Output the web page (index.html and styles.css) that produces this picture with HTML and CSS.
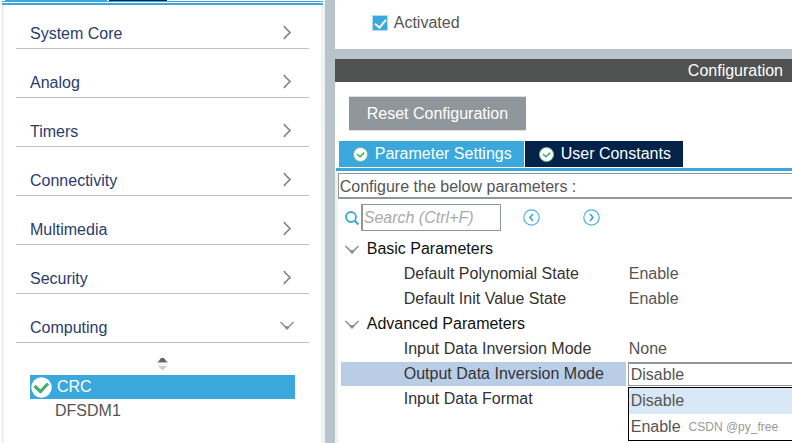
FILE: index.html
```html
<!DOCTYPE html>
<html lang="en">
<head>
<meta charset="utf-8">
<title>Configuration</title>
<link rel="stylesheet" href="styles.css">
</head>
<body>
<svg class="defs" aria-hidden="true">
  <symbol id="right" viewBox="0 0 10 15"><path d="M2 1 3.500 3 8 7.500 3.500 12 2 14" fill="none" stroke="#858585" stroke-width="1.700"/></symbol>
  <symbol id="down" viewBox="0 0 14 9"><path d="M.5 1 2.500 3 5.500 6H8.500L11.500 3 13.500 1" fill="none" stroke="#8c8c8c" stroke-width="1.500"/><path d="M4.500 5.500h5L8 8.500H6z" fill="#8c8c8c"/></symbol>
  <symbol id="ok" viewBox="0 0 16 16"><circle cx="8" cy="8" r="7.500" fill="#fff" stroke="#66bd83"/><path d="m4 7.500 3.500 3 4.500-4.500" fill="none" stroke="#3fac68" stroke-width="1.600"/></symbol>
</svg>
<div class="app">
  <nav class="sidebar" aria-label="Categories">
    <div class="strip"><span class="strip-on"></span><span class="strip-off"></span></div>
    <div class="side-body">
      <div class="categories">
        <button class="category">System Core<svg class="right"><use href="#right"/></svg></button>
        <button class="category">Analog<svg class="right"><use href="#right"/></svg></button>
        <button class="category">Timers<svg class="right"><use href="#right"/></svg></button>
        <button class="category">Connectivity<svg class="right"><use href="#right"/></svg></button>
        <button class="category">Multimedia<svg class="right"><use href="#right"/></svg></button>
        <button class="category">Security<svg class="right"><use href="#right"/></svg></button>
        <button class="category open">Computing<svg class="down"><use href="#down"/></svg></button>
      </div>
      <svg class="sorter" viewBox="0 0 11 14"><path d="M4 1h3l3 4H1z" fill="#656565"/><path d="M0 5h11v1H0z" fill="#bbb"/><path d="M0 7h11v1H0z" fill="#eee"/><path d="M1 9h9L6 13H5z" fill="#ccc"/></svg>
      <ul class="modules">
        <li><button class="module selected"><svg class="module-ok" viewBox="0 0 21 21"><circle cx="10.500" cy="10.500" r="10.200" fill="#fff"/><path d="m3.500 9 6 5.500 7.500-8" fill="none" stroke="#45b06c" stroke-width="3.200"/></svg>CRC</button></li>
        <li><button class="module">DFSDM1</button></li>
      </ul>
    </div>
  </nav>
  <main class="content">
    <section class="mode">
      <label class="activated"><input class="check" type="checkbox" checked>Activated</label>
    </section>
    <section class="config">
      <h1 class="title">Configuration</h1>
      <button class="reset">Reset Configuration</button>
      <div class="tabs" role="tablist">
        <button class="tab active" role="tab" aria-selected="true"><svg class="ok"><use href="#ok"/></svg>Parameter Settings</button>
        <button class="tab" role="tab" aria-selected="false"><svg class="ok"><use href="#ok"/></svg>User Constants</button>
      </div>
      <div class="pane">
        <p class="hint">Configure the below parameters :</p>
        <div class="search">
          <svg class="lens" viewBox="0 0 14 14"><circle cx="6" cy="6" r="5" fill="none" stroke="#3aa8dc" stroke-width="1.800"/><path d="m9.500 9.500 4 4" stroke="#3aa8dc" stroke-width="2.200"/></svg>
          <input class="field" type="text" placeholder="Search (Ctrl+F)" aria-label="Search">
          <button class="step" aria-label="Previous"><svg class="ring" viewBox="0 0 17 17"><circle cx="8.500" cy="8.500" r="7.700" fill="none" stroke="#4fb1e0" stroke-width="1.200"/><path d="m10 5-3 3.500 3 3.500" fill="none" stroke="#3aa8dc" stroke-width="1.700"/></svg></button>
          <button class="step" aria-label="Next"><svg class="ring" viewBox="0 0 17 17"><circle cx="8.500" cy="8.500" r="7.700" fill="none" stroke="#4fb1e0" stroke-width="1.200"/><path d="m7 5 3 3.500-3 3.500" fill="none" stroke="#3aa8dc" stroke-width="1.700"/></svg></button>
        </div>
        <table class="params">
          <colgroup><col class="name-col"><col></colgroup>
          <tbody>
            <tr><th class="group" colspan="2"><svg class="down"><use href="#down"/></svg>Basic Parameters</th></tr>
            <tr><th class="name">Default Polynomial State</th><td class="value">Enable</td></tr>
            <tr><th class="name">Default Init Value State</th><td class="value">Enable</td></tr>
            <tr><th class="group" colspan="2"><svg class="down"><use href="#down"/></svg>Advanced Parameters</th></tr>
            <tr><th class="name">Input Data Inversion Mode</th><td class="value">None</td></tr>
            <tr><th class="name current"><label for="output-mode">Output Data Inversion Mode</label></th>
              <td class="edit"><select class="choice" id="output-mode"><option>Disable</option><option>Enable</option></select>
                <ul class="menu" role="listbox" aria-label="Output Data Inversion Mode"><li class="item hover" role="option">Disable</li><li class="item" role="option">Enable<span class="mark">CSDN @py_free</span></li></ul></td></tr>
            <tr><th class="name">Input Data Format</th><td></td></tr>
          </tbody>
        </table>
      </div>
    </section>
  </main>
</div>
</body>
</html>
```
FILE: styles.css
```css
* {
  box-sizing: border-box;
}

body {
  margin: 0;
  background: #fff;
  color: #555;
  font: 16px/18px "Liberation Sans", Arial, sans-serif;
}

button,
input,
select {
  font: inherit;
  color: inherit;
  border: 0;
  border-radius: 0;
  background: none;
  padding: 0;
  margin: 0;
}

ul {
  list-style: none;
  margin: 0;
  padding: 0;
}

svg {
  flex: none;
}

.defs {
  display: none;
}

.app {
  display: flex;
  min-height: 100vh;
}

/* Category list */

.sidebar {
  display: flex;
  flex-direction: column;
  flex: 0 0 41%;
  padding-left: 1px;
}

.strip {
  display: flex;
  gap: 2px;
  height: 5px;
  margin: 0 2px 0 1px;
  padding-left: 3px;
  background: linear-gradient(#3aa8dc, #3aa8dc) 0 1px / 100% 1px no-repeat,
    linear-gradient(#3aa8dc, #3aa8dc) 0 3px / 100% 2px no-repeat;
}

.strip-on,
.strip-off {
  width: 102px;
  height: 1px;
  background: #3aa8dc;
}

.strip-off {
  width: 58px;
  background: #03234b;
}

.side-body {
  flex: 1;
  border: solid #f0f1f2;
  border-width: 0 4px 0 3px;
  padding: 20px 12px 0;
}

.categories {
  display: flex;
  flex-direction: column;
  gap: 25px;
}

.category {
  display: flex;
  align-items: flex-start;
  justify-content: space-between;
  height: 24px;
  padding: 0 17px 0 14px;
  border-bottom: 1px solid #b8c4ca;
  color: #2b3c6b;
}

.category.open {
  padding-right: 15px;
}

.right {
  width: 10px;
  height: 15px;
}

.down {
  width: 14px;
  height: 9px;
}

.category .down {
  margin-top: 2px;
}

.sorter {
  display: block;
  width: 11px;
  height: 14px;
  margin: 14px auto 4px;
}

.modules {
  padding: 0 14px;
}

.module {
  display: flex;
  align-items: center;
  gap: 5px;
  width: 100%;
  height: 24px;
  padding-left: 25px;
}

.module.selected {
  padding-left: 1px;
  background: #3aa8dc;
  color: #fff;
}

.module-ok {
  width: 21px;
  height: 21px;
}

/* Mode and configuration */

.content {
  display: flex;
  flex-direction: column;
  flex: 1;
  min-width: 0;
  border-left: 10px solid #b8c4ca;
}

.mode {
  padding: 14px 37px 17px;
  border-bottom: 10px solid #b8c4ca;
}

.activated {
  display: flex;
  align-items: center;
  gap: 6px;
}

.check {
  appearance: none;
  width: 16px;
  height: 16px;
  border: 1px solid #b4def2;
  background: #3aa8dc;
  position: relative;
}

.check::after {
  content: "";
  position: absolute;
  left: 4px;
  top: 1px;
  width: 5px;
  height: 9px;
  border: solid #fff;
  border-width: 0 2px 2px 0;
  transform: rotate(40deg);
}

.config {
  display: flex;
  flex-direction: column;
  flex: 1;
}

.title {
  margin: 0;
  padding: 3px 9px 2px;
  background: #505251;
  color: #fff;
  font-size: 16px;
  font-weight: 400;
  text-align: right;
}

.reset {
  align-self: flex-start;
  height: 35px;
  margin: 14px 14px 10px;
  padding: 0 18px;
  border: solid #dcdfe1;
  border-width: 1px 0;
  background: #8f979d;
  color: #fff;
}

.tabs {
  display: flex;
  gap: 1px;
  margin-left: 1px;
  padding-left: 3px;
  padding-bottom: 1px;
  border-bottom: 3px solid #3aa8dc;
}

.tab {
  display: flex;
  align-items: center;
  gap: 7px;
  height: 26px;
  padding: 0 12px 0 14px;
  background: #03234b;
  color: #fff;
}

.tab.active {
  background: #3aa8dc;
}

.ok {
  width: 15px;
  height: 15px;
}

.pane {
  flex: 1;
  padding-top: 2px;
  border-left: 3px solid #f0f1f2;
}

.hint {
  margin: 0;
  padding: 4px 1px 1px;
  border: 1px solid #8f979d;
  border-right: 0;
  border-bottom-width: 2px;
}

.search {
  display: flex;
  align-items: center;
  gap: 2px;
  height: 37px;
  padding-left: 7px;
}

.lens {
  width: 14px;
  height: 14px;
}

.field {
  width: 140px;
  height: 27px;
  padding: 0 1px;
  border: 1px solid #8f979d;
  border-left-width: 2px;
  background: #fff;
}

.field::placeholder {
  color: #aaa;
  font-style: italic;
  opacity: 1;
}

.step {
  display: flex;
  margin-left: 20px;
}

.step + .step {
  margin-left: 41px;
}

.ring {
  width: 17px;
  height: 17px;
}

.params {
  width: 100%;
  table-layout: fixed;
  border-spacing: 0;
  text-align: left;
}

.name-col {
  width: 290px;
}

.params tr {
  height: 25px;
}

.params th,
.params td {
  padding: 0;
  font-weight: 400;
  vertical-align: middle;
}

.params .group {
  padding-left: 7px;
  color: #111;
}

.group .down {
  margin-right: 8px;
}

.params .name {
  padding-left: 63px;
  color: #333;
  border: solid transparent;
  border-width: 0 2px 0 3px;
}

.params .current {
  background: #b9cee6 padding-box;
  border-top-width: 1px;
}

.params .value {
  padding-left: 1px;
}

.params .edit {
  position: relative;
  vertical-align: bottom;
}

.choice {
  appearance: none;
  display: block;
  width: 100%;
  height: 24px;
  padding-left: 2px;
  border: 1px solid #8f979d;
  border-top-width: 2px;
  border-right: 0;
}

.menu {
  position: absolute;
  top: 26px;
  left: 0;
  width: 100%;
  border: 1px solid #000;
  border-right: 0;
  background: #fff;
}

.item {
  display: flex;
  align-items: center;
  gap: 8px;
  height: 26px;
  padding-left: 2px;
}

.item.hover {
  background: #d9e8f6;
}

.mark {
  color: #999;
  font-size: 12px;
}
```
